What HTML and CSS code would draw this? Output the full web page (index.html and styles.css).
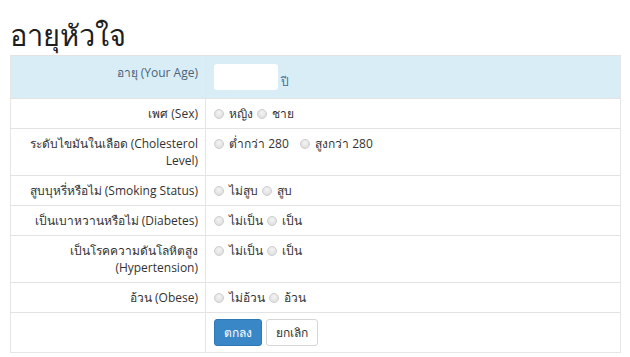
FILE: index.html
```html
<!DOCTYPE html>
<html lang="th">
  <head>
    <meta charset="UTF-8" />
    <title>อายุหัวใจ</title>
    <link rel="stylesheet" href="styles.css">
  </head>
  <body>
    <div class="page">
      <h2 class="title">อายุหัวใจ</h2>
      <table class="form-table">
        <tr class="info">
          <td class="label">อายุ (Your Age)</td>
          <td class="field"><input type="text" class="age-input"> <span class="unit">ปี</span></td>
        </tr>
        <tr>
          <td class="label">เพศ (Sex)</td>
          <td class="field">
            <label><input type="radio" name="sex"> หญิง</label>
            <label><input type="radio" name="sex"> ชาย</label>
          </td>
        </tr>
        <tr>
          <td class="label">ระดับไขมันในเลือด (Cholesterol Level)</td>
          <td class="field">
            <label class="wide"><input type="radio" name="chol"> ต่ำกว่า 280</label>
            <label class="wide"><input type="radio" name="chol"> สูงกว่า 280</label>
          </td>
        </tr>
        <tr>
          <td class="label">สูบบุหรี่หรือไม่ (Smoking Status)</td>
          <td class="field">
            <label><input type="radio" name="smoke"> ไม่สูบ</label>
            <label><input type="radio" name="smoke"> สูบ</label>
          </td>
        </tr>
        <tr>
          <td class="label">เป็นเบาหวานหรือไม่ (Diabetes)</td>
          <td class="field">
            <label><input type="radio" name="dm"> ไม่เป็น</label>
            <label><input type="radio" name="dm"> เป็น</label>
          </td>
        </tr>
        <tr>
          <td class="label">เป็นโรคความดันโลหิตสูง (Hypertension)</td>
          <td class="field">
            <label><input type="radio" name="ht"> ไม่เป็น</label>
            <label><input type="radio" name="ht"> เป็น</label>
          </td>
        </tr>
        <tr>
          <td class="label">อ้วน (Obese)</td>
          <td class="field">
            <label><input type="radio" name="obese"> ไม่อ้วน</label>
            <label><input type="radio" name="obese"> อ้วน</label>
          </td>
        </tr>
        <tr class="actions">
          <td class="label"></td>
          <td class="field">
            <button class="btn btn-primary">ตกลง</button>
            <button class="btn btn-default">ยกเลิก</button>
          </td>
        </tr>
      </table>
    </div>
  </body>
</html>
```

FILE: styles.css
```css
body {
  margin: 0;
  background: #fff;
  color: #333;
  font-family: "Open Sans", "Noto Sans", sans-serif;
  font-size: 12px;
}

.page {
  padding: 0 9px 0 10px;
}

.title {
  margin: 0;
  padding-top: 17px;
  height: 38px;
  font-size: 29px;
  font-weight: 500;
  line-height: 36px;
  color: #1e1e1e;
}

.form-table {
  width: 100%;
  border-collapse: collapse;
  border: 1px solid #e6e6e6;
}

.form-table td {
  border-top: 1px solid #e3e3e3;
  padding: 6px 8px 6px 8px;
  line-height: 17px;
  vertical-align: top;
}

.form-table .label {
  width: 179px;
  text-align: right;
  padding-right: 7px;
  border-right: 1px solid #e6e6e6;
}

.info td {
  background: #d9edf7;
  padding-top: 8px;
  padding-bottom: 8px;
}

.info .label {
  color: #4a6478;
}

.age-input {
  width: 64px;
  height: 26px;
  box-sizing: border-box;
  border: none;
  border-radius: 3px;
  background: #fff;
  vertical-align: bottom;
}

.unit {
  color: #3d6f96;
}

.field label {
  margin-right: 1px;
}

.field label.wide {
  margin-right: 8px;
}

input[type="radio"] {
  appearance: none;
  width: 10px;
  height: 10px;
  margin: 0 2px 0 0;
  border: 1px solid #cfcfcf;
  border-radius: 50%;
  background: radial-gradient(circle at 50% 35%, #f4f4f4, #d9d9d9);
  vertical-align: -1px;
}

.actions td {
  padding-top: 6px;
  padding-bottom: 6px;
}

.btn {
  height: 27px;
  padding: 0 9px;
  border-radius: 3px;
  font-family: inherit;
  font-size: 12px;
  margin: 0 1px 0 0;
}

.btn-primary {
  background: #3a87c8;
  border: 1px solid #2e78b6;
  color: #fff;
}

.btn-default {
  background: #fff;
  border: 1px solid #d6d6d6;
  color: #333;
}
```
